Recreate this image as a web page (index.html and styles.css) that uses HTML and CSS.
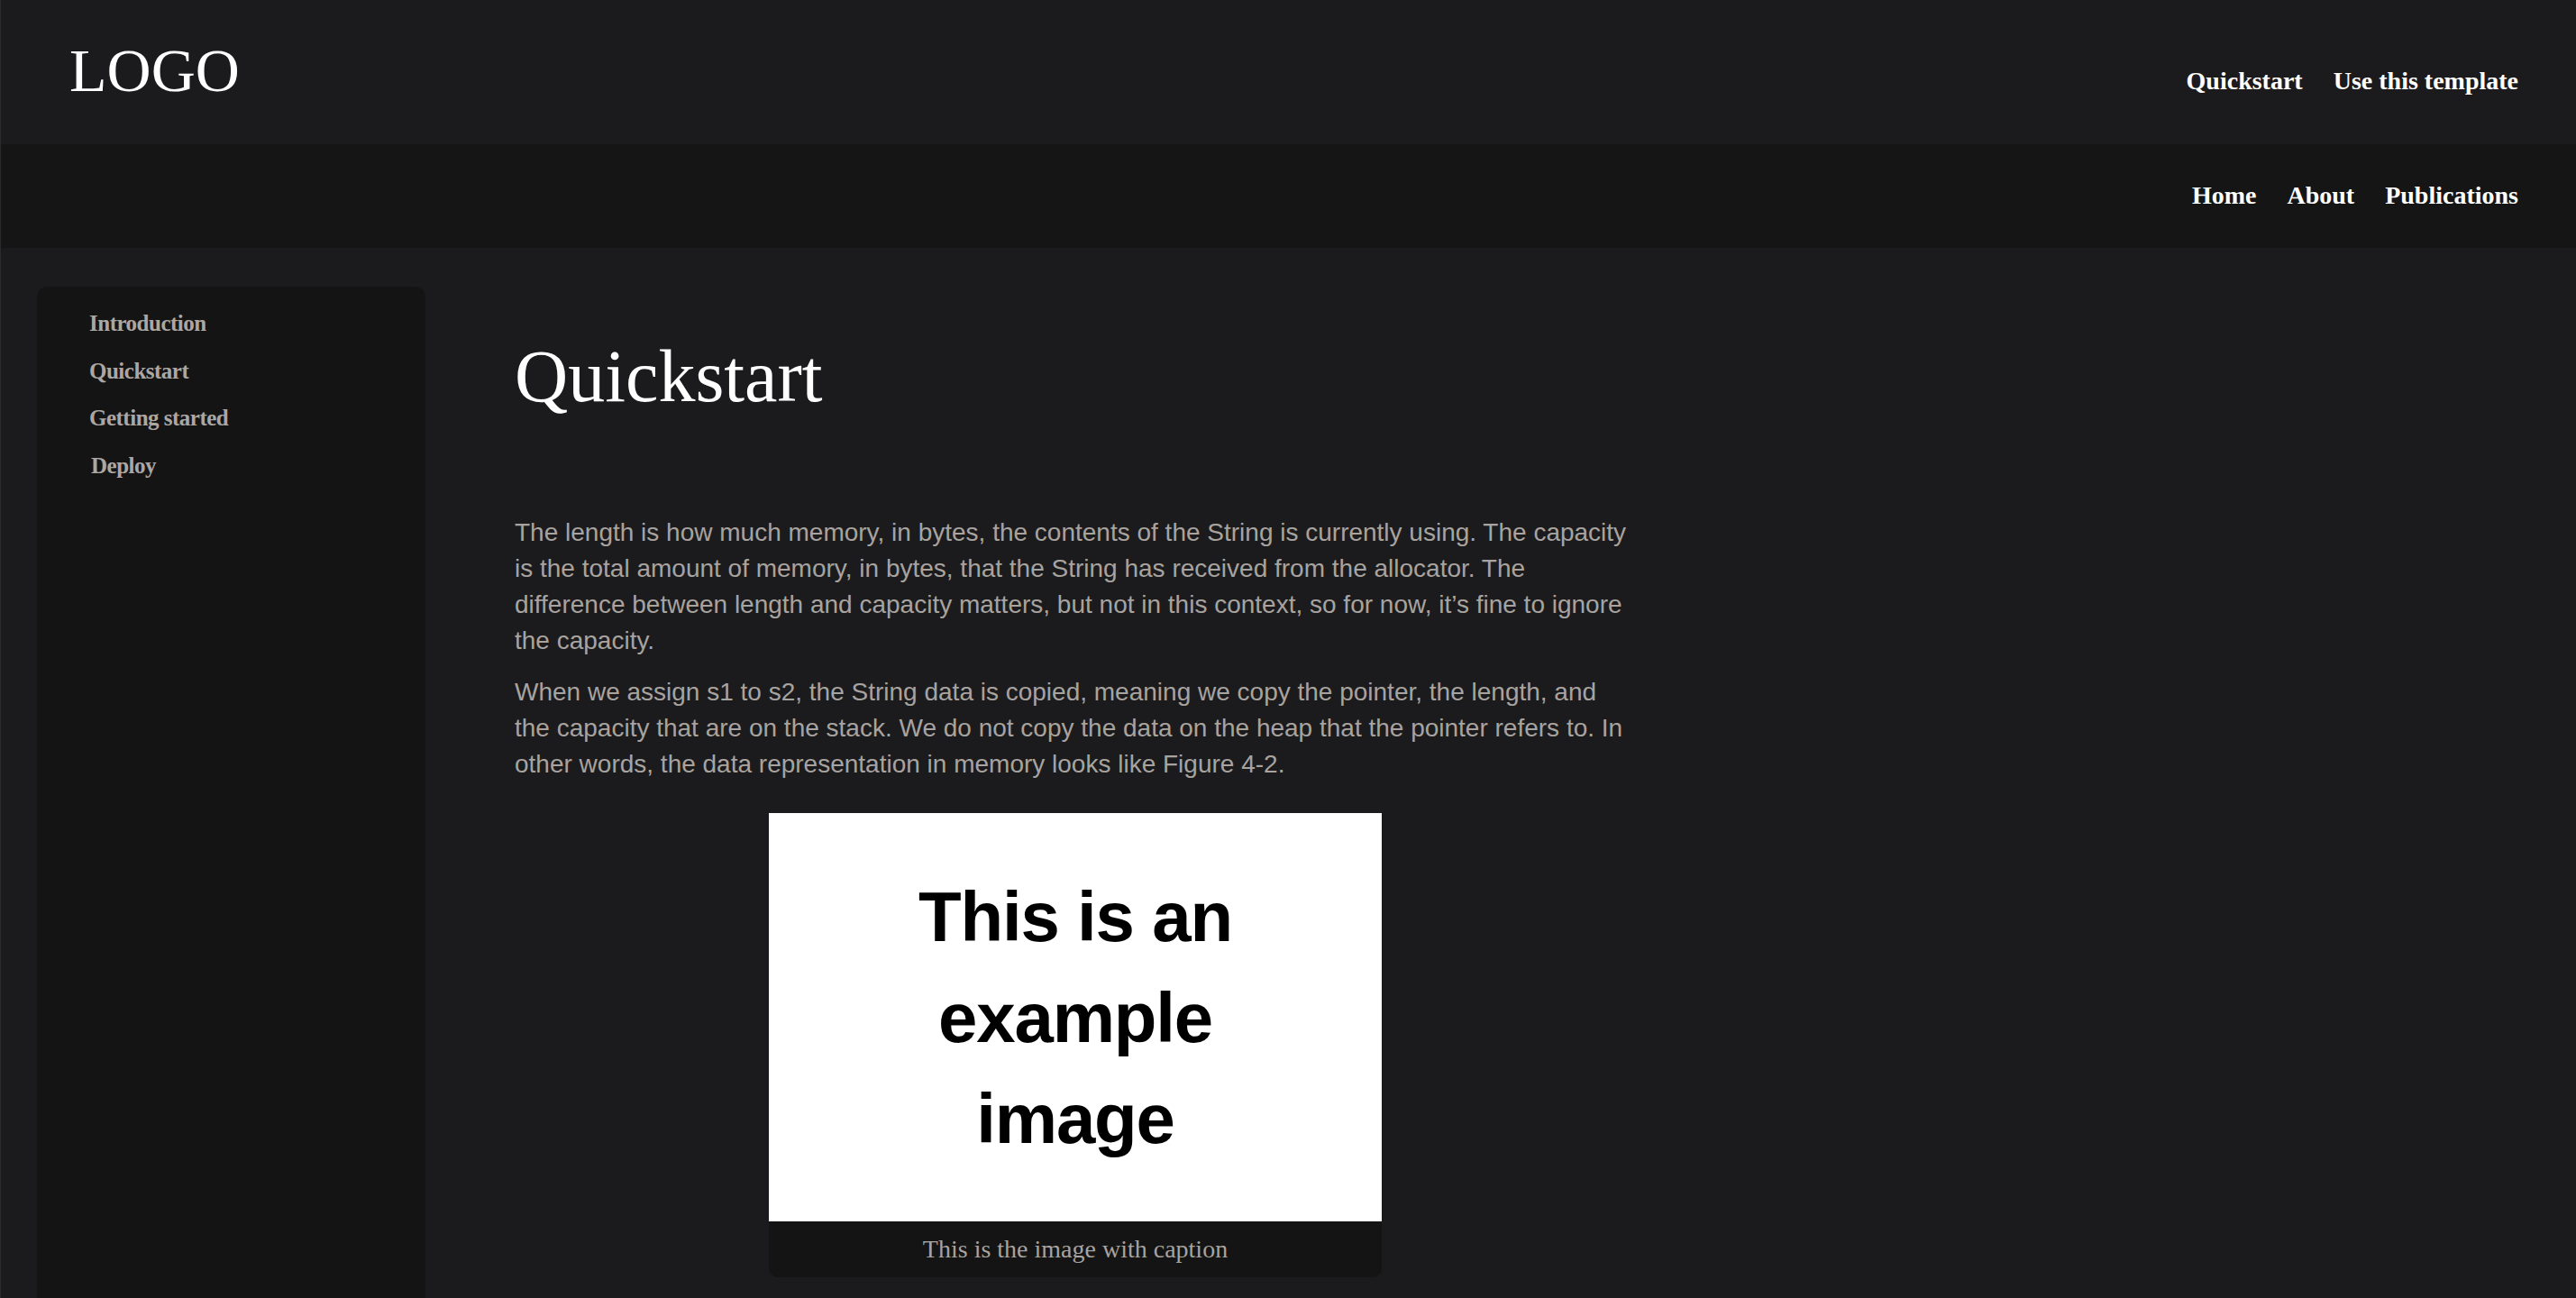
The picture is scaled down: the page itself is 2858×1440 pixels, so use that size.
FILE: index.html
```html
<!DOCTYPE html>
<html lang="en">
<head>
<meta charset="utf-8">
<title>Quickstart</title>
<link rel="stylesheet" href="styles.css">
</head>
<body>
<div class="page">
  <header class="topbar">
    <div class="logo">LOGO</div>
    <nav class="topnav">
      <a href="#">Quickstart</a>
      <a href="#">Use this template</a>
    </nav>
  </header>
  <div class="subbar">
    <nav class="subnav">
      <a href="#">Home</a>
      <a href="#">About</a>
      <a href="#">Publications</a>
    </nav>
  </div>
  <div class="layout">
    <aside class="sidebar">
      <a href="#" class="side-link">Introduction</a>
      <a href="#" class="side-link">Quickstart</a>
      <a href="#" class="side-link">Getting started</a>
      <a href="#" class="side-link side-link-indent">Deploy</a>
    </aside>
    <main class="content">
      <h1 class="title">Quickstart</h1>
      <p class="para">The length is how much memory, in bytes, the contents of the String is currently using. The capacity is the total amount of memory, in bytes, that the String has received from the allocator. The difference between length and capacity matters, but not in this context, so for now, it’s fine to ignore the capacity.</p>
      <p class="para">When we assign s1 to s2, the String data is copied, meaning we copy the pointer, the length, and the capacity that are on the stack. We do not copy the data on the heap that the pointer refers to. In other words, the data representation in memory looks like Figure 4-2.</p>
      <figure class="figure">
        <div class="figure-image">
          <div class="figure-image-text">This is an<br>example<br>image</div>
        </div>
        <figcaption class="figure-caption">This is the image with caption</figcaption>
      </figure>
    </main>
  </div>
</div>
</body>
</html>
```

FILE: styles.css
```css
html, body {
  margin: 0;
  padding: 0;
  height: 100%;
  overflow: hidden;
  background: #1b1b1e;
}

.page {
  min-height: 100%;
  border-left: 1px solid #2b2b2d;
  background: #1b1b1e;
  font-family: "Liberation Serif", "Times New Roman", serif;
  display: flex;
  flex-direction: column;
}

a {
  text-decoration: none;
}

.topbar {
  height: 160px;
  box-sizing: border-box;
  display: flex;
  justify-content: space-between;
  align-items: flex-start;
  padding: 0 64px 0 76px;
  background: #1b1b1e;
}

.logo {
  margin-top: 44px;
  font-size: 68px;
  line-height: 68px;
  color: #ffffff;
}

.topnav,
.subnav {
  display: flex;
  gap: 34px;
}

.topnav {
  margin-top: 76px;
}

.topnav a,
.subnav a {
  color: #ffffff;
  font-weight: bold;
  font-size: 28px;
  line-height: 28px;
}

.subbar {
  height: 115px;
  box-sizing: border-box;
  background: #151515;
  display: flex;
  justify-content: flex-end;
  padding: 43px 64px 0 0;
}

.layout {
  flex: 1;
  display: flex;
  align-items: flex-start;
}

.sidebar {
  margin: 43px 0 0 40px;
  width: 431px;
  height: 1200px;
  flex-shrink: 0;
  box-sizing: border-box;
  padding: 15px 0 0 58px;
  background: #141415;
  border-radius: 12px;
  display: flex;
  flex-direction: column;
  align-items: flex-start;
}

.side-link {
  color: #aca7a2;
  font-weight: bold;
  font-size: 25px;
  letter-spacing: -0.5px;
  line-height: 52.7px;
}

.side-link-indent {
  padding-left: 2px;
}

.content {
  margin-left: 99px;
  width: 1240px;
  padding-top: 94px;
}

.title {
  margin: 0 0 104px;
  font-weight: normal;
  font-size: 82px;
  line-height: 1.2;
  color: #ffffff;
}

.para {
  margin: 0 0 17px;
  font-family: "Liberation Sans", Arial, Helvetica, sans-serif;
  font-size: 28px;
  line-height: 40px;
  color: #a8a39e;
}

.figure {
  margin: 34px 0 0 282px;
  width: 680px;
}

.figure-image {
  height: 453px;
  background: #ffffff;
  display: flex;
  align-items: center;
  justify-content: center;
}

.figure-image-text {
  font-family: "Liberation Sans", Arial, Helvetica, sans-serif;
  font-weight: bold;
  font-size: 78px;
  letter-spacing: -1.2px;
  line-height: 112px;
  text-align: center;
  color: #000000;
  filter: blur(0.5px);
}

.figure-caption {
  height: 62px;
  background: #141414;
  border-radius: 0 0 10px 10px;
  text-align: center;
  font-size: 28px;
  line-height: 62px;
  color: #a8a39e;
}
```
